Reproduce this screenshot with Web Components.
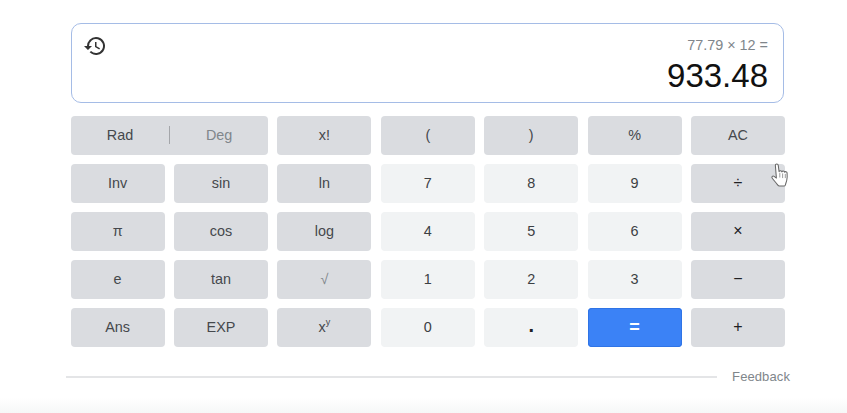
<!DOCTYPE html>
<html lang="en"><head><meta charset="utf-8"><title>Calculator</title>
<style>
html,body{margin:0;padding:0;background:#fff}
body{width:847px;height:413px;overflow:hidden;position:relative;font-family:"Liberation Sans",Arial,sans-serif}
</style></head><body>
<calc-app>
<calc-display expr="77.79 × 12 =" value="933.48"></calc-display>
<calc-keypad>
<calc-toggle></calc-toggle>
<calc-key>x!</calc-key><calc-key>(</calc-key><calc-key>)</calc-key><calc-key>%</calc-key><calc-key>AC</calc-key>
<calc-key>Inv</calc-key><calc-key>sin</calc-key><calc-key>ln</calc-key><calc-key kind="num">7</calc-key><calc-key kind="num">8</calc-key><calc-key kind="num">9</calc-key><calc-key sym>÷</calc-key>
<calc-key>π</calc-key><calc-key>cos</calc-key><calc-key>log</calc-key><calc-key kind="num">4</calc-key><calc-key kind="num">5</calc-key><calc-key kind="num">6</calc-key><calc-key sym>×</calc-key>
<calc-key>e</calc-key><calc-key>tan</calc-key><calc-key faint>√</calc-key><calc-key kind="num">1</calc-key><calc-key kind="num">2</calc-key><calc-key kind="num">3</calc-key><calc-key sym>−</calc-key>
<calc-key>Ans</calc-key><calc-key>EXP</calc-key><calc-key>x<sup style="font-size:9px;line-height:0;position:relative;top:-5px;vertical-align:baseline">y</sup></calc-key><calc-key kind="num">0</calc-key><calc-key kind="num" dot>.</calc-key><calc-key kind="eq">=</calc-key><calc-key sym>+</calc-key>
</calc-keypad>
<calc-footer></calc-footer>
</calc-app>
<hand-cursor></hand-cursor>
<script>
function def(name, html, init){
  customElements.define(name, class extends HTMLElement{
    constructor(){super();this.attachShadow({mode:'open'}).innerHTML=html;}
    connectedCallback(){ if(init) init(this); }
  });
}
def('calc-app',`<style>:host{display:block;box-sizing:border-box;width:847px;height:413px;padding:23px 0 0 71px;background:linear-gradient(#fff 0,#fff 398px,#f6f7f7 413px);color:#3c4043}</style><slot></slot>`);
def('calc-display',`<style>
:host{display:flex;flex-direction:column;align-items:flex-end;box-sizing:border-box;width:713px;height:80px;border:1.5px solid #a5bce6;border-radius:10px;padding:12.5px 15px 0 0;background:#fff;position:relative}
#e{font-size:14.4px;line-height:16px;color:#80868b}
#v{font-size:33px;line-height:38px;margin-top:4.5px;color:#111}
svg{position:absolute;left:11px;top:10px}
</style>
<svg width="24" height="24" viewBox="0 0 24 24" fill="#333"><path d="M13 3a9 9 0 0 0-9 9H1l3.9 3.9.1.1L9 12H6a7 7 0 1 1 2.05 4.95L6.64 18.36A9 9 0 1 0 13 3zm-1 5v5l4.25 2.52.77-1.28-3.52-2.09V8z"/></svg>
<span id="e"></span><span id="v"></span>`,el=>{
  el.shadowRoot.getElementById('e').textContent=el.getAttribute('expr');
  el.shadowRoot.getElementById('v').textContent=el.getAttribute('value');
});
def('calc-keypad',`<style>:host{display:grid;grid-template-columns:repeat(7,94px);grid-auto-rows:39px;column-gap:9.4px;row-gap:9px;margin:12.5px 0 0 -.4px}</style><slot></slot>`);
const keyCss=`:host{display:flex;align-items:center;justify-content:center;border-radius:4px;background:#dadce0;color:#45484c;font-size:14.4px;line-height:16px;padding-bottom:1px;box-sizing:border-box}`;
def('calc-key',`<style>${keyCss}
:host([kind=num]){background:#f1f3f4;color:#3c4043}
:host([kind=eq]){background:#3b82f6;color:#fff;font-weight:700;font-size:18px;box-shadow:inset 0 0 0 1px #2f74e6}
:host([sym]){color:#202124;font-size:16px}
:host([dot]){color:#202124;font-size:20px;font-weight:700;padding-bottom:4px}
:host([faint]){color:#80868b}
</style><slot></slot>`);
def('calc-toggle',`<style>:host{grid-column:span 2;display:grid;grid-template-columns:1fr 1fr;align-items:center;border-radius:4px;background:#dadce0;font-size:14.4px;line-height:16px;padding-bottom:1px;position:relative}
span{text-align:center;color:#45484c}
i+span{color:#80868b;padding-left:1px}
i{position:absolute;left:98.5px;top:10px;width:1px;height:18px;background:#a4a6aa}
span:first-child{padding-right:2px}
</style><span>Rad</span><i></i><span>Deg</span>`);
def('calc-footer',`<style>:host{display:flex;align-items:center;gap:15.5px;width:724px;margin:21px 0 0 -5px;font-size:13px;line-height:18px;color:#80868b;letter-spacing:.1px}
i{flex:1;height:2px;background:#e4e5e7}
</style><i></i><span>Feedback</span>`);
def('hand-cursor',`<style>:host{display:block;position:absolute;left:769px;top:162px;width:21px;height:28px}</style>
<svg width="21" height="28" viewBox="0 0 20 27"><path d="M6 3.2c0-1.7 2.6-1.8 2.8 0l.8 6.2c.2-1.4 2.5-1.3 2.7.2.3-1.2 2.4-1.1 2.6.3.4-1 2.3-.8 2.4.6.2 2.4.1 5.4-.3 7.1-.4 1.8-1 3-1.3 4.4-.2.8-.7 1.2-1.5 1.2H10c-.8 0-1.3-.4-1.8-1.1C6.8 20.1 4.5 17.6 3 15.7c-1-1.3.5-2.7 1.8-1.8l2.2 1.6z" fill="#fff" stroke="#666" stroke-width="1" stroke-linejoin="round"/><path d="M10.3 10.5v4.5M13 11v4.5M15.6 11.500v4" stroke="#888" stroke-width=".8" fill="none"/></svg>`);
</script>
</body></html>
